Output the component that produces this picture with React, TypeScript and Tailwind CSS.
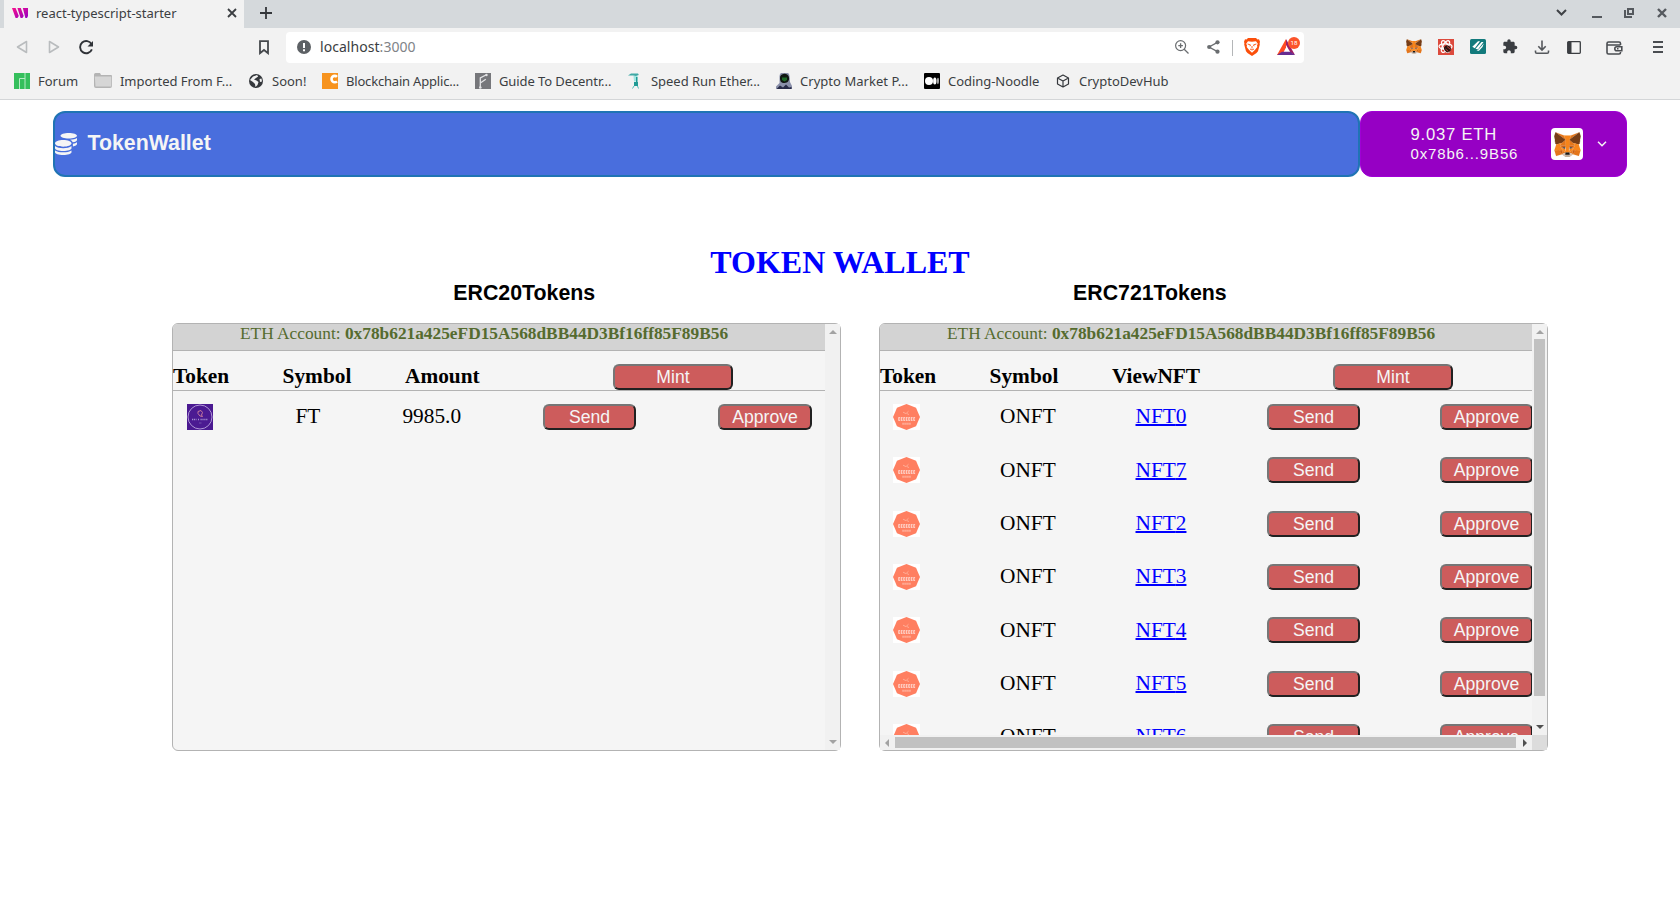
import React from "react";
import { MdExtension } from "react-icons/md";

const ADDRESS = "0x78b621a425eFD15A568dBB44D3Bf16ff85F89B56";

const FOX: [string, string][] = [
  ["#e2761b", "274.1,35.5 174.6,109.4 193,65.8"],
  ["#e4761b", "44.4,35.5 143.1,110.1 125.6,65.8"],
  ["#e4761b", "238.3,206.8 211.8,247.4 268.5,263 284.8,207.7"],
  ["#e4761b", "33.9,207.7 50.1,263 106.8,247.4 80.3,206.8"],
  ["#e4761b", "103.6,138.2 87.8,162.1 144.1,164.6 142.1,104.1"],
  ["#e4761b", "214.9,138.2 175.9,103.4 174.6,164.6 230.8,162.1"],
  ["#e4761b", "106.8,247.4 140.6,230.9 111.4,208.1"],
  ["#e4761b", "177.9,230.9 211.8,247.4 207.1,208.1"],
  ["#d7c1b3", "211.8,247.4 177.9,230.9 180.6,253 180.3,262.3"],
  ["#d7c1b3", "106.8,247.4 138.3,262.3 138.1,253 140.6,230.9"],
  ["#cd6116", "106.8,247.4 111.6,206.8 80.3,207.7"],
  ["#cd6116", "207,206.8 211.8,247.4 238.3,207.7"],
  ["#cd6116", "230.8,162.1 174.6,164.6 179.8,193.5 188.1,176.1 208.1,185.2"],
  ["#cd6116", "110.6,185.2 130.6,176.1 138.8,193.5 144.1,164.6 87.8,162.1"],
  ["#e4751f", "87.8,162.1 111.4,208.1 110.6,185.2"],
  ["#e4751f", "208.1,185.2 207.1,208.1 230.8,162.1"],
  ["#f6851b", "179.8,193.5 173.1,227.6 177.9,230.9 207.1,208.1 208.1,185.2"],
  ["#f6851b", "110.6,185.2 111.4,208.1 140.6,230.9 145.4,227.6 138.8,193.5"],
  ["#c0ad9e", "180.3,262.3 180.6,253 178.1,250.8 140.4,250.8 138.1,253 138.3,262.3 106.8,247.4 117.8,256.4 140.1,271.9 178.4,271.9 200.8,256.4 211.8,247.4"],
  ["#161616", "177.9,230.9 173.1,227.6 145.4,227.6 140.6,230.9 138.1,253 140.4,250.8 178.1,250.8 180.6,253"],
  ["#763d16", "278.3,114.2 286.8,73.4 274.1,35.5 177.9,106.9 214.9,138.2 267.2,153.5 278.8,140 273.8,136.4 281.8,129.1 275.6,124.3 283.6,118.2"],
  ["#763d16", "31.8,73.4 40.3,114.2 34.9,118.2 42.9,124.3 36.8,129.1 44.8,136.4 39.8,140 51.3,153.5 103.6,138.2 140.6,106.9 44.4,35.5"],
  ["#f6851b", "267.2,153.5 214.9,138.2 230.8,162.1 207.1,208.1 238.3,207.7 284.8,207.7"],
  ["#f6851b", "103.6,138.2 51.3,153.5 33.9,207.7 80.3,207.7 111.4,208.1 87.8,162.1"],
  ["#f6851b", "174.6,164.6 177.9,106.9 193.1,65.8 125.6,65.8 140.6,106.9 144.1,164.6 145.3,182.8 145.4,227.6 173.1,227.6 173.3,182.8"],
  ["#233447", "138.8,193.5 110.6,185.2 130.5,176.1"],
  ["#233447", "179.7,193.5 188,176.1 208,185.2"],
];

function Fox({ className }: { className: string }) {
  return (
    <svg viewBox="30 33 259 240" className={className}>
      {FOX.map(([fill, points], i) => (
        <polygon key={i} fill={fill} stroke={fill} strokeWidth="1" points={points} />
      ))}
    </svg>
  );
}

function TabStrip() {
  return (
    <div className="flex h-7 bg-[#d5d9dc] pl-1">
      <div className="flex w-60 items-center bg-[#f2f2f2] pl-2">
        <svg className="mb-[2px] h-[10px] w-4" viewBox="0 0 16 10">
          <defs>
            <linearGradient id="fav" x1="0" x2="1" y1="0" y2="1">
              <stop offset="0" stopColor="#f90f8c" />
              <stop offset="1" stopColor="#9300c4" />
            </linearGradient>
          </defs>
          <path d="M0 0h3.6L6.8 8 5.4 10H3.6zM5.4 0h3.4l2.9 8-1.3 2H8.6zM10.8 0H16v8l-1 2h-1.600z" fill="url(#fav)" />
        </svg>
        <span className="mb-[2px] ml-2 w-[191px] text-[13px] leading-[26px] text-[#3b3e42]">react-typescript-starter</span>
        <svg className="mb-[2px] h-[10px] w-[10px]" viewBox="0 0 10 10">
          <path d="M1 1l8 8M9 1L1 9" stroke="#3b3e42" strokeWidth="1.8" />
        </svg>
      </div>
      <svg className="ml-4 mt-[7px] h-3 w-3" viewBox="0 0 12 12">
        <path d="M6 0v12M0 6h12" stroke="#33363a" strokeWidth="1.8" />
      </svg>
      <svg className="ml-[1284px] mt-2 h-[10px] w-[112px]" viewBox="0 0 112 10" fill="none" stroke="#55595e">
        <path d="M1 2l4.5 4.5L10 2" strokeWidth="2" stroke="#3f4246" />
        <path d="M36 9h10" strokeWidth="2" />
        <path d="M72 1h5v5h-5zM69 2v7h7" strokeWidth="2" />
        <path d="M102 1l8 8M110 1l-8 8" strokeWidth="2.4" />
      </svg>
    </div>
  );
}

function Toolbar() {
  return (
    <div className="flex h-9 items-start bg-[#f2f2f2] pt-1">
      <svg className="ml-4 mt-2 h-[15px] w-20 shrink-0" viewBox="0 0 80 15" fill="none">
        <path d="M10.5 1.5v11L1.5 7zM33.5 1.5v11l9-5.5z" stroke="#b9bcbe" strokeWidth="1.6" strokeLinejoin="round" />
        <path d="M75.6 4.2A6.1 6.1 0 1 0 75.9 9.4" stroke="#303338" strokeWidth="1.9" />
        <path d="M77 1v5.5h-5.5z" fill="#303338" />
      </svg>
      <svg className="ml-[162px] mt-2 h-[15px] w-3 shrink-0" viewBox="0 0 12 15">
        <path d="M2 1.2h8v12l-4-3.2-4 3.2z" fill="none" stroke="#45484c" strokeWidth="1.8" />
      </svg>
      <div className="ml-4 flex h-[31px] w-[1018px] shrink-0 items-center rounded bg-white">
        <svg className="mb-px ml-[11px] h-[14px] w-[14px]" viewBox="0 0 14 14">
          <circle cx="7" cy="7" r="7" fill="#5d6165" />
          <path d="M7 3v5M7 9.3v2" stroke="#fff" strokeWidth="2" />
        </svg>
        <span className="mb-px ml-[9px] w-[854.500px] text-[14px] leading-[30px] tracking-[0.05px] text-[#3b3e42]">
          localhost<span className="text-[#808387]">:3000</span>
        </span>
        <svg className="mb-px h-[14px] w-[14px]" viewBox="0 0 14 14" fill="none" stroke="#6a6d70">
          <circle cx="5.6" cy="5.6" r="5" strokeWidth="1.2" />
          <path d="M9.2 9.2l4.3 4.3M3.3 5.6h4.6M5.6 3.3v4.6" strokeWidth="1.3" />
        </svg>
        <svg className="mb-px ml-[18px] h-[14px] w-[13px]" viewBox="0 0 13 14">
          <path d="M10.5 2.4L2 7l8.500 4.600" fill="none" stroke="#6a6d70" strokeWidth="1.3" />
          <circle cx="10.500" cy="2.300" r="2.100" fill="#6a6d70" />
          <circle cx="2.200" cy="7" r="2.100" fill="#6a6d70" />
          <circle cx="10.500" cy="11.700" r="2.100" fill="#6a6d70" />
        </svg>
        <div className="ml-3 h-4 w-px bg-[#b4b6b8]" />
        <svg className="mb-[2px] ml-[11px] h-[18px] w-4" viewBox="0 0 16 18">
          <path d="M4 0h8l1.500 1.500L15 1.300l1 2.500-.4 1.500.2 1.200-1.800 6.700L12.500 15 8 18l-4.500-3L2 13.200.2 6.500l.2-1.200L0 3.800l1-2.500 1.500.2z" fill="#fb4f0b" />
          <path d="M4 3.200l4 .6 4-.6 1.800 2.600-.8 1.700.3 1.600-2.400 3L8 14.800l-2.900-2.700-2.400-3L3 7.500l-.8-1.700z" fill="#fff" />
          <path d="M3.600 6l2.900.9-.6 1.300M12.400 6l-2.900.9.6 1.300M8 8v2.500M6 11l2 1 2-1" fill="none" stroke="#fb4f0b" strokeWidth=".9" />
        </svg>
        <svg className="mb-[3px] ml-[17px] h-[18px] w-[23px]" viewBox="0 0 23 18">
          <path d="M9 2L0 18h5l4-7.500z" fill="#ff4b22" />
          <path d="M9 2l9 16-4.500-2.500L9 8z" fill="#9e1f63" />
          <path d="M0 18h18l-4.500-3.200H5z" fill="#662d91" />
          <circle cx="17" cy="6" r="6" fill="#fb542b" />
          <text x="17" y="8.400" textAnchor="middle" fontSize="6.200" fill="#fff" fontFamily="Roboto, sans-serif">18</text>
        </svg>
      </div>
      <Fox className="ml-[102px] mt-[7px] h-[15px] w-4 shrink-0" />
      <svg className="ml-4 mt-[7px] h-4 w-4 shrink-0" viewBox="0 0 16 16">
        <path d="M0 0h16v16H0z" fill="#dc4a3d" />
        <g fill="none" stroke="#fff" strokeWidth="1.200">
          <ellipse cx="7.500" cy="7.500" rx="6.500" ry="2.700" />
          <ellipse cx="7.500" cy="7.500" rx="6.500" ry="2.700" transform="rotate(60 7.500 7.500)" />
          <ellipse cx="7.500" cy="7.500" rx="6.500" ry="2.700" transform="rotate(120 7.500 7.500)" />
        </g>
        <ellipse cx="9.500" cy="9.800" rx="3.200" ry="3.600" fill="#2d1513" transform="rotate(-40 9.500 9.800)" />
        <path d="M7.500 10l3 2.500M9 7.500l3.500 3" stroke="#dc4a3d" strokeWidth=".8" />
      </svg>
      <svg className="ml-4 mt-[7px] h-[15px] w-4 shrink-0" viewBox="0 0 16 15">
        <rect width="16" height="15" rx="1.500" fill="#127a7c" />
        <path d="M2.300 7.800L8 2.300h2L4.800 9.300zM5.500 9.800L11.500 3h2L8 10.500zM6.500 12l1.500-1L13.800 4.500 12.500 8 9 11.800z" fill="#fff" />
      </svg>
      <MdExtension className="ml-4 mt-[6px] h-[17px] w-4 shrink-0 text-[#3b3e42]" />
      <svg className="ml-4 mt-2 h-[15px] w-4 shrink-0" viewBox="0 0 16 15" fill="none" stroke="#55585c" strokeWidth="1.600">
        <path d="M8 .5v9.500M4.300 6.300L8 10l3.700-3.700M1.500 10.500v1.500q0 1.300 1.300 1.300h10.400q1.300 0 1.300-1.300v-1.500" />
      </svg>
      <svg className="ml-[17px] mt-[9px] h-[13px] w-[14px] shrink-0" viewBox="0 0 14 13">
        <rect x=".7" y=".7" width="12.600" height="11.600" rx=".8" fill="none" stroke="#3b3e42" strokeWidth="1.300" />
        <path d="M1 1h3.500v11H1z" fill="#3b3e42" />
      </svg>
      <svg className="ml-[25px] mt-[9px] h-[14px] w-[17px] shrink-0" viewBox="0 0 17 14" fill="none" stroke="#4a4d51" strokeWidth="1.600">
        <path d="M14.500 4V2.500a1.500 1.500 0 0 0-1.500-1.500H2.500A1.500 1.500 0 0 0 1 2.500v9A1.500 1.500 0 0 0 2.500 13H13a1.500 1.500 0 0 0 1.500-1.500V11M1 4h13.500" />
        <path d="M15.800 5.700h-5a2 2 0 0 0 0 4h5zM11 7.700h1.500" />
      </svg>
      <svg className="ml-[30px] mt-[9px] h-3 w-[10px] shrink-0" viewBox="0 0 10 12">
        <path d="M0 1h10M0 6h10M0 11h10" stroke="#4a4d51" strokeWidth="1.800" />
      </svg>
    </div>
  );
}

const bookmarks: { label: string; width: string; gap: string; tracking?: string; icon: React.ReactNode }[] = [
  {
    label: "Forum", width: "w-20", gap: "w-6",
    icon: (
      <svg className="h-4 w-4" viewBox="0 0 16 16">
        <path d="M0 0h16v16H0z" fill="#35bf5c" />
        <path d="M5.500 16V5.500H11M11 0v16" fill="none" stroke="#b6ecc5" strokeWidth="1" />
      </svg>
    ),
  },
  {
    label: "Imported From F...", width: "w-[154px]", gap: "w-[26px]", tracking: "tracking-[-0.04px]",
    icon: (
      <svg className="h-4 w-[18px]" viewBox="0 0 18 16">
        <path d="M0 1.500A1.500 1.500 0 0 1 1.500 0H6l1 2h10a1 1 0 0 1 1 1v10a2 2 0 0 1-2 2H2a2 2 0 0 1-2-2z" fill="#b4b4b4" />
        <path d="M.8 3.500h16.500v10H1.500z" fill="#d6d6d6" />
      </svg>
    ),
  },
  {
    label: "Soon!", width: "w-[74px]", gap: "w-6",
    icon: (
      <svg className="h-4 w-4" viewBox="0 0 16 16">
        <circle cx="8" cy="8" r="7" fill="#35383c" />
        <path d="M5 3.500l4-1.500 1.200 1.500-2.200 1.500L6 6.500l2.500 1 2 1.500-1 3-2 2-.5-3-2-2-3-2zM11.500 6l2-.5.5 3-2 .5z" fill="#f2f2f2" />
      </svg>
    ),
  },
  {
    label: "Blockchain Applic...", width: "w-[153px]", gap: "w-6", tracking: "tracking-[-0.19px]",
    icon: (
      <svg className="h-4 w-4" viewBox="0 0 16 16">
        <path d="M0 0h16v16H0z" fill="#f7931e" />
        <path d="M15 3.800A3.200 3.200 0 1 0 15 8.300" fill="none" stroke="#fff" strokeWidth="2.600" />
      </svg>
    ),
  },
  {
    label: "Guide To Decentr...", width: "w-[152px]", gap: "w-6", tracking: "tracking-[-0.09px]",
    icon: (
      <svg className="h-4 w-4" viewBox="0 0 16 16">
        <path d="M0 0h16v16H0z" fill="#76777b" />
        <path d="M5.300 15V5l6.500-3.500M5.300 10l5.500-3.800" fill="none" stroke="#e3e3e5" strokeWidth="1.300" />
        <circle cx="5.300" cy="14.500" r="1.300" fill="#e3e3e5" />
        <circle cx="11.500" cy="2" r="1.200" fill="#e3e3e5" />
      </svg>
    ),
  },
  {
    label: "Speed Run Ether...", width: "w-[149px]", gap: "w-6", tracking: "tracking-[-0.04px]",
    icon: (
      <svg className="h-4 w-4" viewBox="0 0 16 16">
        <path d="M1 2.500L4 .5h7l.8 1.500L9 3 6 2.500z" fill="#3fa9a5" />
        <path d="M6.500 3h4l-.5 5.500H7z" fill="#9fe6e2" />
        <path d="M9 4h1.500v6H9zM7 9h4v4H7z" fill="#1f9b95" />
        <path d="M7 13l-1.500 2.500M10.500 13l1 2.500" stroke="#55bdb8" />
      </svg>
    ),
  },
  {
    label: "Crypto Market P...", width: "w-[148px]", gap: "w-6", tracking: "tracking-[0.04px]",
    icon: (
      <svg className="h-4 w-4" viewBox="0 0 16 16">
        <path d="M0 16v-2.500L3.500 10V4a5 5 0 0 1 10-1l.5 6 2 4v3z" fill="#8a90aa" />
        <path d="M4 5a4.500 4 0 0 1 9-.5c.5 2.500-1 5.500-4.500 5.500S4 8 4 5z" fill="#101812" />
        <path d="M6 4.500h5v2.500L8.500 8.500 6 7z" fill="#1d6a28" />
        <path d="M1 15.500l3-3 3 2 3-3 3 3 2.500-.5V16H1z" fill="#272b48" />
      </svg>
    ),
  },
  {
    label: "Coding-Noodle", width: "w-[131px]", gap: "w-6", tracking: "tracking-[-0.04px]",
    icon: (
      <svg className="h-4 w-4" viewBox="0 0 16 16">
        <rect width="16" height="16" rx="1" />
        <circle cx="5" cy="8" r="4" fill="#fff" />
        <ellipse cx="10.800" cy="8" rx="1.700" ry="3.600" fill="#fff" />
        <ellipse cx="14" cy="8" rx=".9" ry="3.300" fill="#bbb" />
      </svg>
    ),
  },
  {
    label: "CryptoDevHub", width: "w-[130px]", gap: "w-6",
    icon: (
      <svg className="h-4 w-4" viewBox="0 0 16 16" fill="none" stroke="#35383c" strokeWidth="1.200" strokeLinejoin="round">
        <path d="M8 2l5.500 3v6L8 14l-5.500-3V5zM2.500 5L8 8l5.500-3M8 8v6" />
      </svg>
    ),
  },
];

function Bookmarks() {
  return (
    <div className="flex h-9 border-b border-[#d4d6d8] bg-[#f2f2f2] pl-[14px] pt-[9px]">
      {bookmarks.map((b) => (
        <div key={b.label} className={`flex shrink-0 ${b.width}`}>
          <div className={`shrink-0 ${b.gap}`}>{b.icon}</div>
          <span className={`whitespace-nowrap text-[13px] leading-[17px] text-[#3b3e42] ${b.tracking ?? ""}`}>{b.label}</span>
        </div>
      ))}
    </div>
  );
}

function Header() {
  return (
    <header className="mt-[11px] flex h-[66px] pl-[53px] font-['Liberation_Sans',sans-serif]">
      <div className="flex w-[1307px] items-center rounded-xl border-2 border-[#2074b4] bg-[#496edd]">
        <svg className="h-[22px] w-[22px]" viewBox="0 0 512 512" fill="#f5f5f5">
          <path d="M0 405.300V448c0 35.300 86 64 192 64s192-28.700 192-64v-42.700C342.700 434.400 267.200 448 192 448S41.300 434.400 0 405.300zM320 128c106 0 192-28.700 192-64S426 0 320 0 128 28.700 128 64s86 64 192 64zM0 300.400V352c0 35.300 86 64 192 64s192-28.700 192-64v-51.600c-41.300 34-116.900 51.600-192 51.600S41.300 334.400 0 300.400zm416 11c57.300-11.100 96-31.700 96-55.400v-42.700c-23.200 16.400-57.300 27.600-96 34.500v63.600zM192 160C86 160 0 195.800 0 240s86 80 192 80 192-35.800 192-80-86-80-192-80zm219.300 56.300c60-10.800 100.700-32 100.700-56.300v-42.700c-35.500 25.100-96.500 38.600-160.700 41.800 29.500 14.300 51.200 33.500 60 57.200z" />
        </svg>
        <span className="mb-[2px] ml-[10.500px] text-[21.330px] font-bold leading-6 text-[#f5f5f5]">TokenWallet</span>
      </div>
      <div className="flex w-[267px] items-center rounded-xl border border-[#a000d6] bg-[#9600c4] pl-[49.500px] text-[#f5f5f5]">
        <div className="w-[139.500px]">
          <div className="pt-px text-[16.700px] leading-[19px] tracking-[0.75px]">9.037 ETH</div>
          <div className="text-[15px] leading-[20px] tracking-[0.85px]">0x78b6...9B56</div>
        </div>
        <div className="ml-px flex h-8 w-8 items-center justify-center rounded bg-white">
          <Fox className="h-[25px] w-[27px]" />
        </div>
        <svg className="ml-[13.500px] h-[6px] w-[10px]" viewBox="0 0 10 6">
          <path d="M1 .8l4 4 4-4" fill="none" stroke="#f5f5f5" strokeWidth="1.500" />
        </svg>
      </div>
    </header>
  );
}

function RedButton({ children, className }: { children: string; className: string }) {
  return (
    <button
      className={`flex h-[26px] shrink-0 items-center justify-center rounded-md border-2 border-b-[#212121] border-l-[#767676] border-r-[#212121] border-t-[#767676] bg-[#cd5c5c] font-['Liberation_Sans',sans-serif] text-[17.600px] leading-5 text-[#f5f5f5] ${className}`}
    >
      {children}
    </button>
  );
}

function FtLogo() {
  return (
    <svg className="h-[26px] w-[26px]" viewBox="0 0 26 26">
      <path d="M0 0h26v26H0z" fill="#4b1a92" />
      <circle cx="13" cy="13" r="12" fill="none" stroke="#b9a3dc" strokeWidth=".9" />
      <path d="M11 7.500l3-1 1.500 2-1 2.500 1 1.500-2.500-.5-2-2.500z" fill="none" stroke="#c77a9c" strokeWidth="1" />
      <path d="M5 15.500h4.500M11 15.500h1M13.500 15.500h7.500" stroke="#a48fd0" strokeWidth="1.500" strokeDasharray="1.200 .7" />
      <path d="M12 19h2.500" stroke="#7350ab" />
    </svg>
  );
}

function OceanLogo() {
  return (
    <svg className="h-[26px] w-[27px]" viewBox="0 0 27 27" preserveAspectRatio="none">
      <path d="M0 0h27v27H0z" fill="#fff" />
      <path d="M13.500 0l9.500 4L27 13.500 23 23l-9.500 4L4 23 0 13.500 4 4z" fill="#ff7f61" />
      <path d="M10 8.500l3 1.500 2.500-2.500M14 10l2 1" fill="none" stroke="#ffb7a3" strokeWidth=".8" />
      <path d="M5.300 14.300h16.800M5.300 16.900h16.800" stroke="#fff" strokeOpacity=".8" strokeWidth="1.200" strokeDasharray="1.800 .7" />
      <path d="M5.300 15.600h16.800" stroke="#fff" strokeOpacity=".8" strokeWidth="1.400" strokeDasharray="1 1.500" />
      <path d="M9.500 20.500h8.500" stroke="#ffc3b3" strokeWidth="2.200" strokeDasharray="1.100 .9" />
    </svg>
  );
}

function Account() {
  return (
    <div className="h-[27px] rounded-tl-[5px] border-b border-[#b3b3b3] bg-[#d3d3d3] pl-[67px] text-[17.330px] leading-[20px] text-[#556b2f]">
      <span className="whitespace-nowrap">
        ETH Account: <b>{ADDRESS}</b>
      </span>
    </div>
  );
}

function HeadRow({ third, mintGap }: { third: string; mintGap: string }) {
  return (
    <div className="flex h-10 border-b border-[#b3b3b3] pt-[13px] text-[21.330px] font-bold leading-[25px]">
      <span className="w-[109.600px] shrink-0">Token</span>
      <span className="w-[122.400px] shrink-0">Symbol</span>
      <span className={`shrink-0 ${mintGap}`}>{third}</span>
      <RedButton className="w-[120px] font-normal">Mint</RedButton>
    </div>
  );
}

const Arrow = ({ d, dark, className }: { d: string; dark?: boolean; className: string }) => (
  <svg className={`shrink-0 ${className}`} viewBox="0 0 8 8">
    <path d={d} fill={dark ? "#505050" : "#a3a3a3"} />
  </svg>
);

const UP = "M4 2l4 4H0z";
const DOWN = "M0 2h8L4 6z";

function Erc20Panel() {
  return (
    <div className="flex h-[428px] w-[669px] rounded-md border border-[#b3b3b3] bg-[#f5f5f5]">
      <div className="w-[652px]">
        <Account />
        <HeadRow third="Amount" mintGap="w-[208px]" />
        <div className="flex pt-[13px] text-[21.330px] leading-[25px]">
          <div className="w-[108px] shrink-0 pl-[14px] pr-[80px]"><FtLogo /></div>
          <span className="ml-[14.500px] w-[106.900px] shrink-0">FT</span>
          <span className="w-[140.600px] shrink-0">9985.0</span>
          <RedButton className="w-[93px]">Send</RedButton>
          <RedButton className="ml-[82px] w-[94px]">Approve</RedButton>
        </div>
      </div>
      <div className="flex w-[15px] flex-col items-center justify-between bg-[#f1f1f1] py-1">
        <Arrow d={UP} className="h-2 w-2" />
        <Arrow d={DOWN} className="h-2 w-2" />
      </div>
    </div>
  );
}

function Erc721Panel() {
  return (
    <div className="flex h-[428px] w-[669px] flex-col rounded-md border border-[#b3b3b3] bg-[#f5f5f5]">
      <div className="flex h-[411px]">
        <div className="w-[652px] overflow-hidden">
          <Account />
          <HeadRow third="ViewNFT" mintGap="w-[221px]" />
          {[0, 7, 2, 3, 4, 5, 6].map((n) => (
            <div key={n} className="flex h-[53.330px] pt-[13px] text-[21.330px] leading-[25px]">
              <div className="w-[120px] shrink-0 pl-[13px]"><OceanLogo /></div>
              <span className="w-[135.500px] shrink-0 pt-[0.2px]">ONFT</span>
              <span className="w-[131.500px] shrink-0 pt-[0.2px]">
                <span className="text-[#0000ff] underline decoration-2">NFT{n}</span>
              </span>
              <RedButton className="w-[93px]">Send</RedButton>
              <RedButton className="ml-20 w-[93px]">Approve</RedButton>
            </div>
          ))}
        </div>
        <div className="flex w-[15px] flex-col items-center bg-[#f1f1f1]">
          <Arrow d={UP} className="mt-1 h-2 w-2" />
          <div className="mt-[3px] h-[357px] w-[11px] bg-[#c1c1c1]" />
          <Arrow d={DOWN} dark className="mt-[27px] h-2 w-2" />
        </div>
      </div>
      <div className="flex h-[15px] items-center bg-[#f1f1f1]">
        <Arrow d="M6 0v8L2 4z" className="ml-[3px] h-2 w-2" />
        <div className="ml-1 h-[11px] w-[621px] bg-[#c1c1c1]" />
        <Arrow d="M2 0v8l4-4z" dark className="ml-[5px] mr-[3px] h-2 w-2" />
        <div className="h-[15px] w-[15px] bg-[#dcdcdc]" />
      </div>
    </div>
  );
}

export default function App() {
  return (
    <div className="h-[907px] w-[1680px] overflow-hidden bg-white font-['Liberation_Serif',serif] text-black">
      <div className="font-['Noto_Sans',sans-serif]">
        <TabStrip />
        <Toolbar />
        <Bookmarks />
      </div>
      <Header />
      <h1 className="mt-[67px] text-center text-[32px] font-bold leading-[37px] text-[#0000ff]">TOKEN WALLET</h1>
      <main className="flex gap-[38px] pl-[172px]">
        <section>
          <h2 className="w-[669px] pl-[281.300px] font-['Liberation_Sans',sans-serif] text-[21.330px] font-bold leading-[24px]">ERC20Tokens</h2>
          <div className="mt-[18px]">
            <Erc20Panel />
          </div>
        </section>
        <section>
          <h2 className="w-[669px] pl-[194px] font-['Liberation_Sans',sans-serif] text-[21.330px] font-bold leading-[24px]">ERC721Tokens</h2>
          <div className="mt-[18px]">
            <Erc721Panel />
          </div>
        </section>
      </main>
    </div>
  );
}
